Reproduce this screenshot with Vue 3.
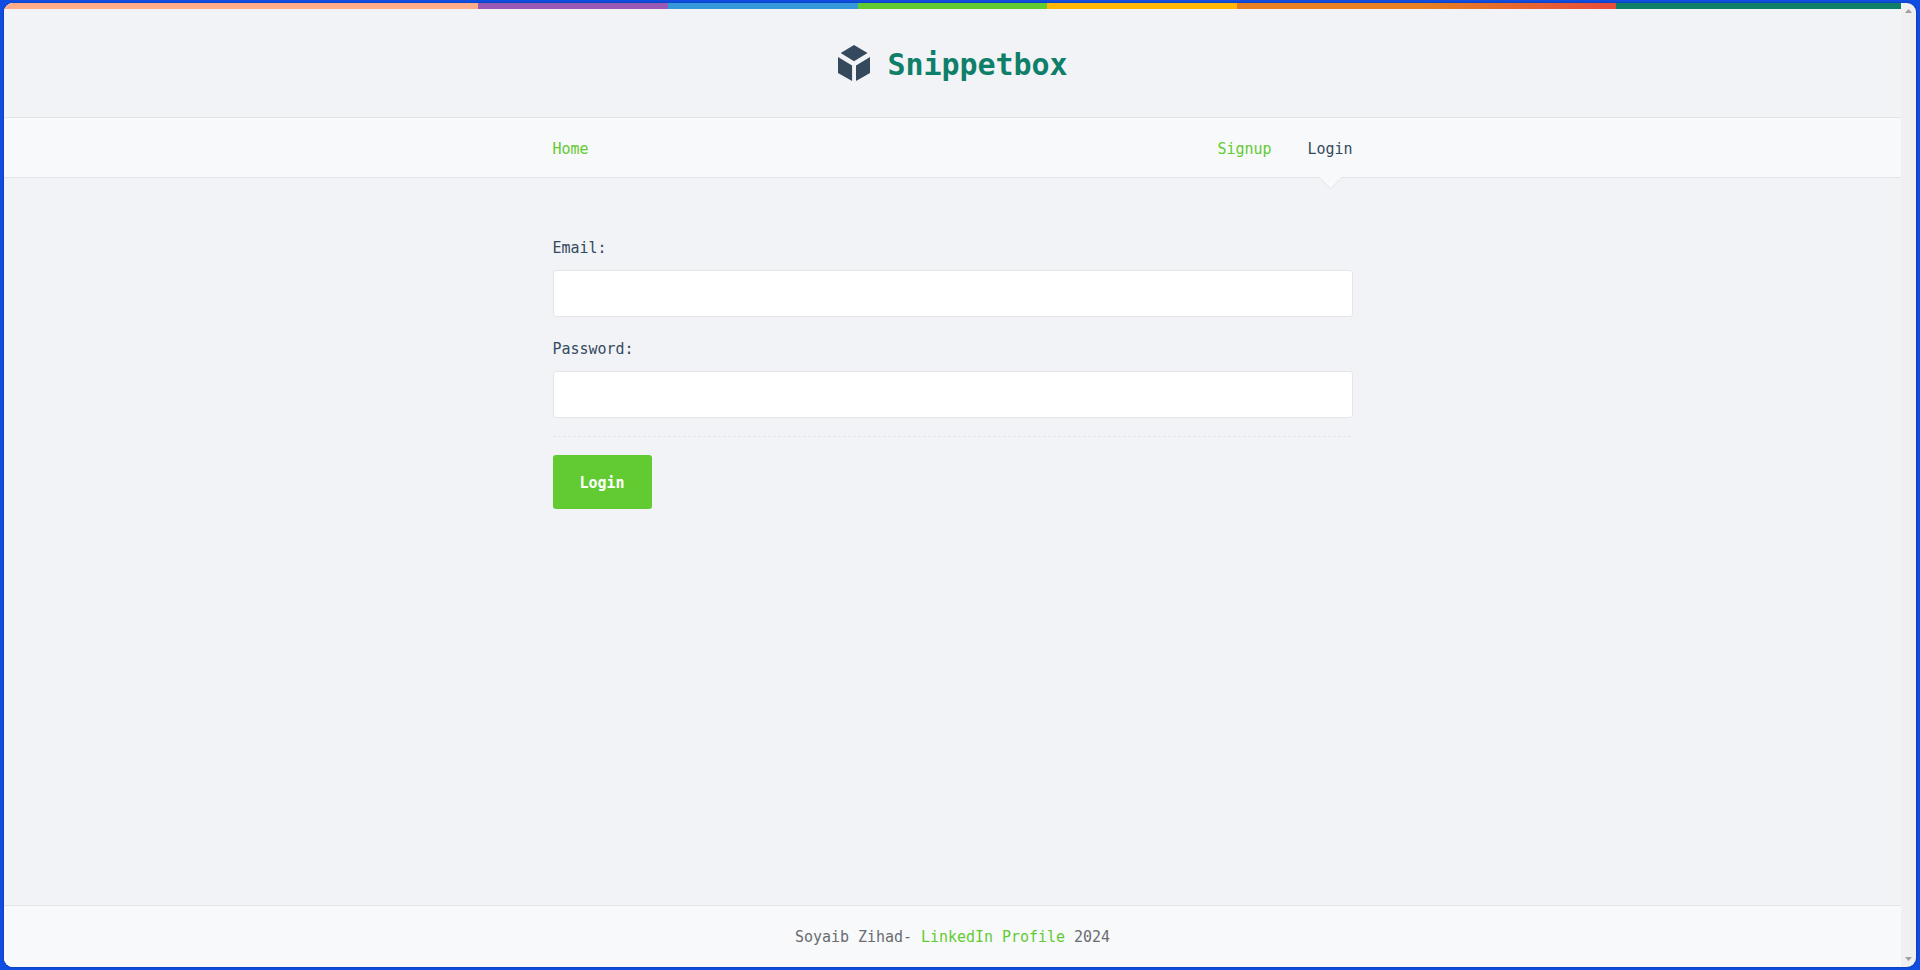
<script setup>
import { ref } from 'vue'

const email = ref('')
const password = ref('')
</script>

<template>
  <div class="desktop">
    <div class="window">
      <div class="page">
        <div class="rainbow"></div>
        <header class="header">
          <svg class="logo" width="32" height="36" viewBox="0 0 32 36">
            <path d="M16 0 29.5 8 16 16.3 2.7 8ZM0 12 14.1 20.5V36L0 28ZM32 12V28L18 36V20.5Z" fill="#34495e" />
          </svg>
          <h1 class="title"><span class="glyphs">Snippetbox</span></h1>
        </header>
        <nav class="nav">
          <div class="nav-inner">
            <a class="link"><span class="glyphs">Home</span></a>
            <div class="nav-right">
              <a class="link"><span class="glyphs">Signup</span></a>
              <a class="link live">
                <span class="glyphs">Login</span>
                <svg class="pointer" width="23" height="13" viewBox="0 0 23 13">
                  <path d="M1 0V1.2L11.5 11.7 22 1.2V0Z" fill="#f7f9fb" />
                  <path d="M1 1.2 11.5 11.7 22 1.2" fill="none" stroke="#e4e5e7" />
                </svg>
              </a>
            </div>
          </div>
        </nav>
        <main class="main">
          <form class="form" @submit.prevent>
            <label class="label" for="email"><span class="glyphs">Email:</span></label>
            <input id="email" v-model="email" class="field" type="email" />
            <label class="label second" for="password"><span class="glyphs">Password:</span></label>
            <input id="password" v-model="password" class="field" type="password" />
            <div class="divider"></div>
            <button class="submit"><span class="glyphs">Login</span></button>
          </form>
        </main>
        <footer class="footer">
          <span class="glyphs">Soyaib Zihad- <a class="link">LinkedIn Profile</a> 2024</span>
        </footer>
      </div>
      <div class="scrollbar">
        <svg width="7" height="4" viewBox="0 0 7 4"><path d="M3.5 0 7 4H0Z" fill="#a0a0a0" /></svg>
        <svg width="7" height="4" viewBox="0 0 7 4"><path d="M0 0H7L3.5 4Z" fill="#a0a0a0" /></svg>
      </div>
    </div>
  </div>
</template>

<style>
body {
  margin: 0;
  overflow: hidden;
}
</style>

<style scoped>
* {
  box-sizing: border-box;
}
.desktop {
  height: 970px;
  padding: 3px 4px;
  background: #104de0;
  font-family: "DejaVu Sans Mono", monospace;
  font-size: 15px;
  letter-spacing: -0.03px;
  line-height: 18px;
  color: #34495e;
}
.window {
  display: flex;
  height: 964px;
  border-radius: 9px;
  overflow: hidden;
  background: #f0f0f0;
  box-shadow: 0 0 2px #0a2c80;
}
.page {
  display: flex;
  flex-direction: column;
  width: 1897px;
  background: #f1f3f6;
}
/* Narrow, tall monospaced letterforms */
.glyphs {
  display: inline-block;
  transform: scaleY(1.08);
  transform-origin: 50% 78%;
  white-space: pre;
}
.rainbow {
  height: 6px;
  background: linear-gradient(to right, #ffac8a 25%, #9b59b6 25% 35%, #3498db 35% 45%, #62cb31 45% 55%, #ffb606 55% 65%, #e67e22 65% 75%, #e74c3c 85%, #0f7f69 85%);
}
.header {
  display: flex;
  justify-content: center;
  align-items: flex-start;
  height: 109px;
  padding-top: 36px;
  border-bottom: 1px solid #e4e5e7;
}
.logo {
  margin-left: 1px;
}
.title {
  margin: 2px 0 0 17px;
  font-size: 30px;
  letter-spacing: -0.06px;
  line-height: 36px;
  color: #0f7f69;
}
.title .glyphs {
  transform: scaleY(1.03);
}
.nav {
  height: 60px;
  background: #f7f9fb;
  border-bottom: 1px solid #e4e5e7;
}
.nav-inner {
  display: flex;
  justify-content: space-between;
  width: 800px;
  margin: 0 auto;
  padding-top: 22px;
}
.nav-right {
  display: flex;
  gap: 36px;
}
.link {
  color: #62cb31;
}
.live {
  position: relative;
  color: #34495e;
}
.pointer {
  position: absolute;
  left: 12px;
  top: 37px;
}
.main {
  flex: 1;
}
.form {
  display: flex;
  flex-direction: column;
  align-items: flex-start;
  width: 800px;
  margin: 0 auto;
  padding-top: 61px;
}
.label {
  height: 18px;
}
.second {
  margin-top: 23px;
}
.field {
  width: 800px;
  height: 47px;
  margin: 13px 0 0;
  padding: 0 18px;
  border: 1px solid #e4e5e7;
  border-radius: 3px;
  background: #fff;
  font: inherit;
  color: #6a6c6f;
}
.divider {
  width: 800px;
  height: 1px;
  margin: 18px 0;
  background: repeating-linear-gradient(to right, #e4e5e7 0 3px, transparent 3px 5px);
}
.submit {
  width: 99px;
  height: 54px;
  padding: 2px 0 0;
  border: 0;
  border-radius: 3px;
  background: #62cb31;
  color: #fff;
  font: inherit;
  font-weight: bold;
  letter-spacing: inherit;
}
.footer {
  height: 62px;
  padding-top: 22px;
  border-top: 1px solid #e4e5e7;
  background: #f7f9fb;
  color: #6a6c6f;
  text-align: center;
}
.scrollbar {
  display: flex;
  flex-direction: column;
  justify-content: space-between;
  align-items: center;
  width: 15px;
  padding: 6px 0;
}
</style>
